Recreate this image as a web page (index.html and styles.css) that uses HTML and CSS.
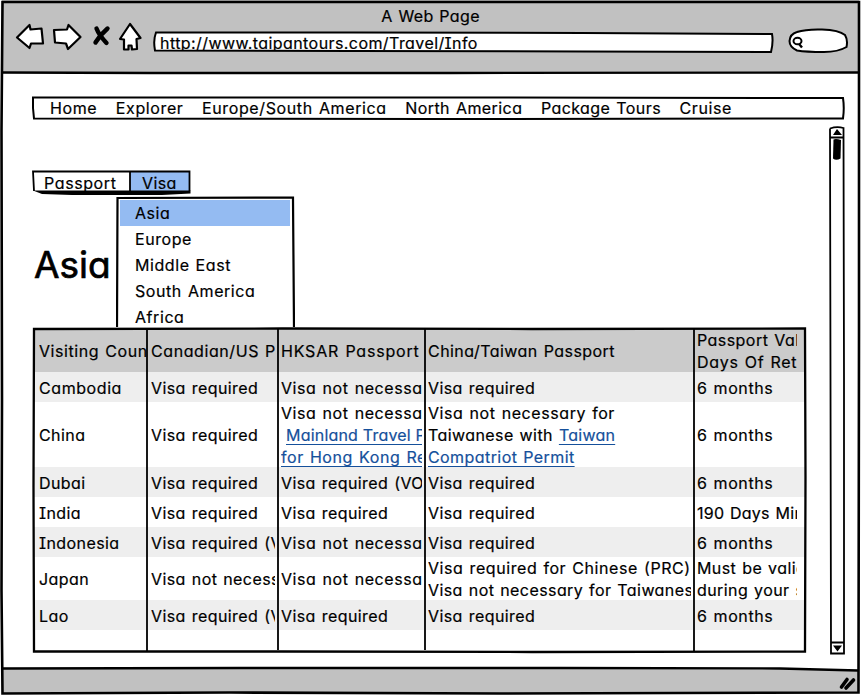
FILE: index.html
```html
<!DOCTYPE html>
<html lang="en">
<head>
<meta charset="utf-8">
<title>A Web Page</title>
<link rel="stylesheet" href="styles.css">
</head>
<body>
<div class="window">
  <header class="chrome">
    <div class="title">A Web Page</div>
    <div class="toolbar">
      <svg class="tools" width="145" height="54" viewBox="0 22 145 54">
        <g fill="#fff" stroke="#000" stroke-width="2.200" stroke-linejoin="round">
          <path d="M17 37.500 L29.500 25 L30.500 29.500 L41.500 28.500 L43 43.500 L31 43.500 L29.500 48 Z"/>
          <path d="M54 30 L67 29.500 L68.500 25 L80.500 37 L68 49 L66 43.500 L55 42.500 Z"/>
          <path d="M130 24 L140.500 38 L136.500 39 L137 49 L132 49.500 L131.500 45.500 L128.500 45.500 L128.500 49.500 L124 49.500 L124 39.500 L120 39 Z"/>
        </g>
        <path d="M96.500 28.500 Q99 35 106.500 43 M107.500 28.500 Q100 35 95.500 42.500" fill="none" stroke="#000" stroke-width="4.400" stroke-linecap="round"/>
      </svg>
      <div class="address">
        <svg class="sketch" viewBox="0 0 621 22"><path d="M3 1.500 L200 1.500 L430 2 L619 3 Q620.500 11 618 21 L430 20.500 L200 20 L2 19.500 Q0 9 3 1.500Z" fill="#fff" stroke="#000" stroke-width="2"/></svg>
        <span class="url">http://www.taipantours.com/Travel/Info</span>
      </div>
      <svg class="search" width="60" height="26" viewBox="788 28 60 26">
        <path d="M797 32 Q806 29 822 29.500 Q839 30 845 35 Q848 40 846.500 47 Q838 52 824 52 Q806 52 797 50.500 Q789.500 47 789.500 41 Q790 34 797 32Z" fill="#fff" stroke="#000" stroke-width="2"/>
        <ellipse cx="797.500" cy="41" rx="4" ry="3.300" fill="none" stroke="#000" stroke-width="2"/>
        <path d="M799 44 L802 47.500" stroke="#000" stroke-width="2.400"/>
      </svg>
    </div>
  </header>

  <main class="page">
    <nav class="nav">
      <svg class="sketch" viewBox="0 0 813 24"><path d="M1 1.500 L400 1.500 L811 2 Q812.500 12 811 22.500 L400 23 L2 22.500 L1 12Z" fill="#fff" stroke="#000" stroke-width="2"/></svg>
      <a>Home</a><a>Explorer</a><a>Europe/South America</a><a class="snug">North America</a><a class="snug">Package Tours</a><a>Cruise</a>
    </nav>

    <div class="body">
      <section class="content">
        <div class="tabs">
          <svg class="sketch" viewBox="0 0 160 25">
            <path d="M1 2 L98 2 L98 21 L2 21Z" fill="#fff"/>
            <path d="M98 2 L157 2 L157 21 L98 21Z" fill="#94bbf2"/>
            <path d="M1 20.500 L98 20.500 L158.500 20.500 L158.500 23.500 L130 25 L40 25 L10 24Z"/>
            <path d="M2 21 L1 1.500 L157.500 1.500 L157.500 21 M98 2 L98 21" fill="none" stroke="#000" stroke-width="1.800"/>
          </svg>
          <a class="tab">Passport</a><a class="tab tab-on">Visa</a>
          <ul class="menu">
            <svg class="sketch" viewBox="0 0 178 132" preserveAspectRatio="none"><path d="M1 132 L1.500 2 L176 1.500 L177 132" fill="#fff" stroke="#000" stroke-width="2.200"/></svg>
            <li class="on">Asia</li><li>Europe</li><li>Middle East</li><li>South America</li><li>Africa</li>
          </ul>
        </div>
        <h1>Asia</h1>
        <div class="table">
          <div class="row head"><div><p class="wide">Visiting Coun</p></div><div><p class="wide">Canadian/US P</p></div><div><p>HKSAR Passport</p></div><div><p class="even">China/Taiwan Passport</p></div><div><p class="even">Passport Val<br><span class="loose">Days Of Ret</span></p></div></div>
          <div class="row alt"><div><p class="wide">Cambodia</p></div><div><p>Visa required</p></div><div><p class="wide">Visa not necessa</p></div><div><p>Visa required</p></div><div><p class="wide">6 months</p></div></div>
          <div class="row tall"><div><p>China</p></div><div><p>Visa required</p></div><div><p class="wide">Visa not necessa<br><a class="indent">Mainland Travel P</a><br><a>for Hong Kong Re</a></p></div><div><p><span class="wide">Visa not necessary for</span><br>Taiwanese with <a class="close">Taiwan</a><br><a>Compatriot Permit</a></p></div><div><p class="wide">6 months</p></div></div>
          <div class="row alt"><div><p>Dubai</p></div><div><p>Visa required</p></div><div><p>Visa required (VO</p></div><div><p>Visa required</p></div><div><p class="wide">6 months</p></div></div>
          <div class="row"><div><p>India</p></div><div><p>Visa required</p></div><div><p>Visa required</p></div><div><p>Visa required</p></div><div><p class="close">190 Days Min</p></div></div>
          <div class="row alt"><div><p>Indonesia</p></div><div><p>Visa required (V</p></div><div><p class="wide">Visa not necessa</p></div><div><p>Visa required</p></div><div><p class="wide">6 months</p></div></div>
          <div class="row double"><div><p>Japan</p></div><div><p>Visa not necess</p></div><div><p class="wide">Visa not necessa</p></div><div><p><span class="wide">Visa required for Chinese (PRC)</span><br>Visa not necessary for Taiwanes</p></div><div><p>Must be valid<br>during your s</p></div></div>
          <div class="row alt"><div><p>Lao</p></div><div><p>Visa required (V</p></div><div><p>Visa required</p></div><div><p>Visa required</p></div><div><p class="wide">6 months</p></div></div>
          <svg class="sketch" viewBox="0 0 775 327">
            <path d="M2 2 L250 1.500 L500 2 L773 1.500 L773.500 150 L773 324.500 L500 325 L250 324.500 L2 324.500 L1.500 160Z" fill="none" stroke="#000" stroke-width="2.300"/>
            <path d="M115 2 V324 M246 2 V323 M393 2 V323 M662 2 V324" fill="none" stroke="#000" stroke-width="1.800"/>
          </svg>
        </div>
      </section>
      <svg class="scrollbar" width="18" height="530" viewBox="828 126 18 530">
        <path d="M830 128.500 Q837 126 843.500 128 L844 380 L844 653.500 L831 653.500 L830.500 380 L830 128.500 M830 137.500 H844 M831 642.500 H844" fill="#fff" stroke="#000" stroke-width="1.800"/>
        <path d="M837 129 L842 135 H833Z M833 645.500 H842 L837.500 651.500Z"/>
        <path d="M833.500 139.500 Q836 138.500 841 140 L840.500 158.500 Q836 161 833 158.500Z"/>
      </svg>
    </div>
  </main>

  <footer class="status"></footer>
  <svg class="frame" viewBox="0 0 861 696">
    <path d="M780 665 L780 668.500 L858 670.500 L858 665Z" fill="#fff"/>
    <path d="M2.500 2 L859 2 L859 330 L858.500 692.500 L500 693.500 L230 692.500 L2.500 693.500 L1.500 590 L2 400 L1.500 130Z" fill="none" stroke="#000" stroke-width="2.600"/>
    <path d="M2 72.500 L150 73 L450 73 L860 72.500 M2 668.500 L240 668 L560 668 L780 668.500 L858 670.500" fill="none" stroke="#000" stroke-width="2.300"/>
    <path d="M841.500 687 L847 679.500 M846 688 L853.500 680" stroke="#000" stroke-width="3.600" stroke-linecap="round"/>
  </svg>
</div>
</body>
</html>
```
FILE: styles.css
```css
* { box-sizing: border-box; }
body {
  margin: 0;
  background: #fff;
  color: #000;
  font: 16px/22px Inter, "Liberation Sans", sans-serif;
  font-feature-settings: "cv11", "cv08";
  letter-spacing: 0.42px;
  word-spacing: 1px;
  -webkit-text-stroke: 0.2px currentColor;
}
p, h1, ul { margin: 0; padding: 0; }
.window { position: relative; display: flex; flex-direction: column; width: 861px; height: 696px; overflow: hidden; }
.sketch { position: absolute; inset: 0; width: 100%; height: 100%; z-index: -1; }
.frame { position: absolute; inset: 0; width: 861px; height: 696px; pointer-events: none; }

.chrome { flex: none; height: 73px; background: #c1c1c1; margin: 0 2px; }
.title { height: 22px; padding-top: 5px; text-align: center; letter-spacing: 0.35px; }
.toolbar { display: flex; height: 50px; margin-left: -2px; }
.address { position: relative; z-index: 0; width: 621px; height: 22px; margin: 9px 0 0 8px; }
.url { display: block; height: 18px; margin: 1px 0 0 7px; overflow: hidden; white-space: nowrap; }
.search { margin: 6px 0 0 14px; }

.page { height: 595px; flex: none; padding: 23px 0 0 32px; }
.nav { position: relative; z-index: 0; display: flex; gap: 18.5px; width: 813px; height: 24px; padding: 1px 0 0 18px; white-space: nowrap; letter-spacing: 0.62px; }
.nav .snug { letter-spacing: 0.43px; }
.body { display: flex; gap: 21px; padding-top: 6px; }
.scrollbar { flex: none; }
.content { width: 775px; padding-top: 44px; }
.status { flex: none; height: 25px; margin: 0 3px; background: #c1c1c1; }

.tabs { position: relative; z-index: 2; display: flex; width: 160px; height: 25px; letter-spacing: 0.6px; }
.tab { width: 98px; padding-left: 12px; padding-top: 2px; }
.tab-on { width: 60px; letter-spacing: 0.4px; }
.menu { position: absolute; left: 84px; top: 26px; width: 179px; height: 131px; padding: 4px 5px 0 4px; list-style: none; letter-spacing: 0.57px; z-index: 1; isolation: isolate; overflow: hidden; }
.menu li { height: 26px; padding: 2px 0 0 15px; white-space: nowrap; }
.menu .on { background: #94bbf2; }

h1 { height: 132px; padding: 48px 0 0 2px; font-size: 37px; line-height: 44px; font-weight: 400; letter-spacing: 0; -webkit-text-stroke-width: 0.7px; }

.table { position: relative; isolation: isolate; height: 327px; padding: 2px; z-index: 3; }
.table .sketch { z-index: 1; }
.row { display: grid; grid-template-columns: 113px 131px 147px 269px 111px; height: 30px; align-items: center; white-space: nowrap; }
.row > div { padding: 2px 3px 0 4px; min-width: 0; }
.row > div:first-child { padding: 2px 0 0 5px; }
.row > div:nth-child(n+3) { padding-left: 3px; }
.row > div:last-child { padding-right: 8px; }
.row p { overflow: hidden; }
.row .wide { letter-spacing: 0.58px; }
.row .loose { letter-spacing: 0.7px; }
.row.head { height: 43px; background: #cbcbcb; letter-spacing: 0.8px; }
.row .even { letter-spacing: 0.45px; }
.row.alt { background: #eee; }
.row.tall { height: 65px; }
.row.tall > div { padding-top: 0; }
.row.double { height: 43px; }
.row.head p, .row.double p { margin: -2px 0 0; }
.row a { color: #15509b; text-decoration: underline; text-decoration-thickness: 1px; text-underline-offset: 3px; }
.row .close { letter-spacing: 0.25px; }
.row .indent { margin-left: 5px; letter-spacing: 0.2px; word-spacing: 0; }
```
